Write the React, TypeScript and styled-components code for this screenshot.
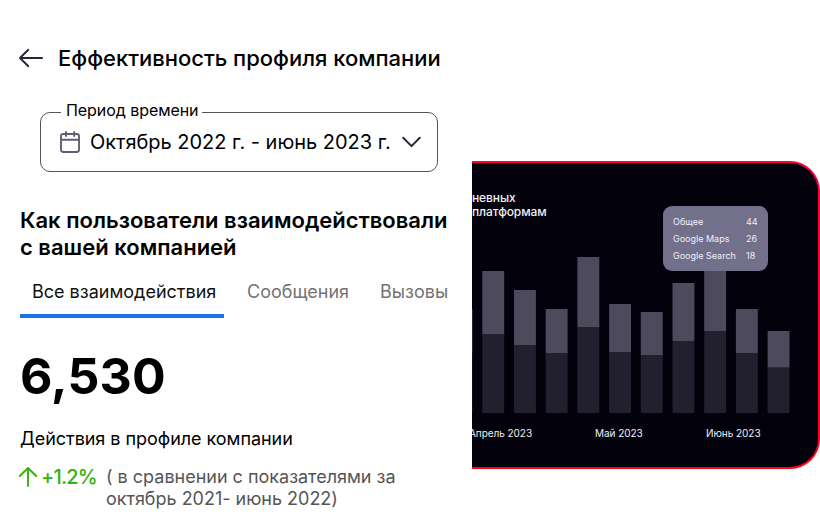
import React from "react";
import styled, { createGlobalStyle } from "styled-components";

const GlobalStyle = createGlobalStyle`
  * { box-sizing: border-box; }
  body { margin: 0; background: #fff; font-family: Inter, sans-serif; color: #000; }
`;

const Page = styled.main`
  display: grid;
  grid-template-columns: 472px 348px;
  width: 820px;
  height: 530px;
  overflow: hidden;
  white-space: nowrap;
`;

const Summary = styled.section`
  min-width: 0;
  padding-top: 44px;
`;

const Header = styled.header`
  display: flex;
  align-items: center;
  gap: 14px;
  height: 28px;
  padding-left: 18px;
`;

const Title = styled.h1`
  margin: 0;
  font-size: 22px;
  line-height: 28px;
  font-weight: 500;
  letter-spacing: -0.01px;
`;

const PeriodField = styled.fieldset`
  width: 398px;
  height: 70px;
  margin: 30px 0 0 40px;
  padding: 0 16px 0 19px;
  border: 1px solid #555459;
  border-radius: 10px;
`;

const PeriodLegend = styled.legend`
  height: 20px;
  margin-left: 1px;
  padding: 0 3px 0 5px;
  font-size: 16px;
  line-height: 17px;
  letter-spacing: -0.06px;
`;

const PeriodValue = styled.div`
  display: flex;
  align-items: center;
  height: 40px;
  font-size: 20px;
  letter-spacing: -0.02px;
`;

const PeriodText = styled.span`
  flex: 1;
  margin-left: 9px;
`;

const Question = styled.h2`
  margin: 35px 0 0 20px;
  font-size: 22px;
  line-height: 27px;
  font-weight: 600;
`;

const Tabs = styled.nav`
  display: flex;
  height: 40px;
  margin: 17px 0 0 20px;
`;

const Tab = styled.a<{ $active?: boolean; $width: number }>`
  width: ${(p) => p.$width}px;
  padding-left: 12px;
  font-size: 18px;
  line-height: 27px;
  color: ${(p) => (p.$active ? "#111" : "#737373")};
  border-bottom: 4px solid ${(p) => (p.$active ? "#1a73e8" : "transparent")};

  & + & { margin-left: 11px; }
`;

const Total = styled.div`
  margin: 27px 0 0 20px;
  font-size: 50px;
  line-height: 62px;
  font-weight: 700;
  letter-spacing: 0.1px;
`;

const TotalCaption = styled.p`
  margin: 21px 0 0 20px;
  font-size: 18px;
  line-height: 22px;
  letter-spacing: -0.04px;
`;

const Comparison = styled.div`
  display: flex;
  align-items: flex-start;
  margin: 16px 0 0 18px;
`;

const Growth = styled.strong`
  width: 65px;
  margin-left: 3px;
  font-size: 20px;
  line-height: 22px;
  font-weight: 500;
  letter-spacing: -0.8px;
  color: #34b20b;
`;

const ComparisonText = styled.p`
  margin: 0;
  font-size: 18px;
  line-height: 22px;
  letter-spacing: -0.01px;
  color: #555;
`;

const ChartCard = styled.section`
  display: flex;
  flex-direction: column;
  position: relative;
  width: 348px;
  height: 308px;
  margin-top: 161px;
  padding: 2px 2px 2px 0;
  overflow: hidden;
  border-radius: 0 30px 30px 0;
  background: linear-gradient(#ff003c, #ff0015);
`;

const ChartBody = styled.div`
  flex: 1;
  min-height: 0;
  overflow: hidden;
  border-radius: 0 28px 28px 0;
  background: #03010b;
  color: #f1f0f5;
`;

const ChartTitle = styled.h3`
  height: 28px;
  margin: 28px 0 0;
  font-size: 12px;
  line-height: 14px;
  font-weight: 500;
  letter-spacing: -0.1px;
`;

const Plot = styled.svg`
  display: block;
  width: 346px;
  height: 194px;
`;

const Axis = styled.div`
  display: grid;
  grid-template-columns: 126px 111px 1fr;
  margin: 13px 0 0 -3px;
  font-size: 10px;
  line-height: 14px;
  letter-spacing: -0.05px;
`;

const Tooltip = styled.div`
  position: absolute;
  top: 45px;
  left: 191px;
  width: 105px;
  height: 65px;
  padding: 7px 10px;
  border-radius: 9px;
  background: #73708c;
  color: #f0eff5;
`;

const TooltipRow = styled.div`
  display: grid;
  grid-template-columns: 73px 1fr;
  font-size: 9px;
  line-height: 17px;
`;

const bars = [
  [309, 353], [271, 334.5], [290, 345], [309, 353], [257, 327], [304, 352.5],
  [312, 355], [283, 341], [260, 331], [309, 353], [331, 367.7],
];

const BASE = 413;
const PLOT_TOP = 219;

export default function App() {
  return (
    <>
      <GlobalStyle />
      <Page>
        <Summary>
          <Header>
            <svg width="26" height="22" viewBox="0 0 26 22" fill="none" stroke="#29243b" strokeWidth="1.9" strokeLinecap="round" strokeLinejoin="round">
              <path d="M24.1 11H2M10.3 2.8L2 11l8.3 8.2" />
            </svg>
            <Title>Еффективность профиля компании</Title>
          </Header>
          <PeriodField>
            <PeriodLegend>Период времени</PeriodLegend>
            <PeriodValue>
              <svg width="21" height="24" viewBox="0 0 21 24" fill="none" stroke="#625d76" strokeWidth="1.9" strokeLinecap="round">
                <rect x="1" y="4" width="18" height="18" rx="2.2" />
                <path d="M1 9.8h18M6 2v4M14.2 2v4" />
              </svg>
              <PeriodText>Октябрь 2022 г. - июнь 2023 г.</PeriodText>
              <svg width="19" height="12" viewBox="0 0 19 12" fill="none" stroke="#29243b" strokeWidth="2" strokeLinecap="round" strokeLinejoin="round">
                <path d="M1.2 1.8l8.3 8.3 8.3-8.3" />
              </svg>
            </PeriodValue>
          </PeriodField>
          <Question>Как пользователи взаимодействовали<br />с вашей компанией</Question>
          <Tabs>
            <Tab $active $width={204}>Все взаимодействия</Tab>
            <Tab $width={122}>Сообщения</Tab>
            <Tab $width={90}>Вызовы</Tab>
          </Tabs>
          <Total>6,530</Total>
          <TotalCaption>Действия в профиле компании</TotalCaption>
          <Comparison>
            <svg width="20" height="22" viewBox="0 0 20 22" fill="none" stroke="#34b20b" strokeWidth="1.9" strokeLinecap="round" strokeLinejoin="round">
              <path d="M10 20V2M1.8 10L10 2l8.2 8" />
            </svg>
            <Growth>+1.2%</Growth>
            <ComparisonText>( в сравнении с показателями за<br />октябрь 2021- июнь 2022)</ComparisonText>
          </Comparison>
        </Summary>
        <ChartCard>
          <ChartBody>
            <ChartTitle>невных<br />платформам</ChartTitle>
            <Plot viewBox={`0 ${PLOT_TOP} 346 194`}>
              {bars.map(([top, split], i) => {
                const x = -21.4 + i * 31.7;
                return (
                  <g key={i}>
                    <rect x={x} y={top} width="21.9" height={split - top} fill="#4d4a5d" />
                    <rect x={x} y={split} width="21.9" height={BASE - split} fill="#22202e" />
                  </g>
                );
              })}
            </Plot>
            <Axis>
              <span>Апрель 2023</span>
              <span>Май 2023</span>
              <span>Июнь 2023</span>
            </Axis>
          </ChartBody>
          <Tooltip>
            <TooltipRow><span>Общее</span><span>44</span></TooltipRow>
            <TooltipRow><span>Google Maps</span><span>26</span></TooltipRow>
            <TooltipRow><span>Google Search</span><span>18</span></TooltipRow>
          </Tooltip>
        </ChartCard>
      </Page>
    </>
  );
}
